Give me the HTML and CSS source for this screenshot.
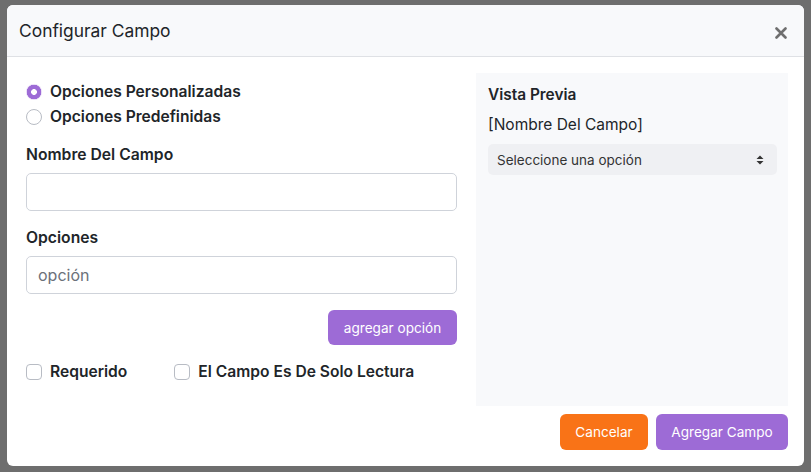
FILE: index.html
```html
<!DOCTYPE html>
<html lang="es">
<head>
<meta charset="utf-8">
<title>Configurar Campo</title>
<link rel="stylesheet" href="styles.css">
</head>
<body>
<div class="backdrop">
  <div class="modal">
    <div class="modal-header">
      <h2 class="modal-title">Configurar Campo</h2>
      <button class="close" aria-label="Cerrar">
        <svg width="12" height="12" viewBox="0 0 12 12"><path d="M1.5 1.5 L10.5 10.5 M10.5 1.5 L1.5 10.5" stroke="#6f6f6f" stroke-width="2.6" stroke-linecap="round"/></svg>
      </button>
    </div>
    <div class="modal-body">
      <div class="left">
        <div class="radios">
          <label class="radio-row"><span class="radio checked"></span><span>Opciones Personalizadas</span></label>
          <label class="radio-row"><span class="radio"></span><span>Opciones Predefinidas</span></label>
        </div>
        <div class="field">
          <div class="label">Nombre Del Campo</div>
          <div class="input"></div>
        </div>
        <div class="field">
          <div class="label">Opciones</div>
          <div class="input"><span class="placeholder">opción</span></div>
        </div>
        <div class="add-row">
          <button class="btn btn-purple btn-add">agregar opción</button>
        </div>
        <div class="checks">
          <label class="check-row"><span class="checkbox"></span><span>Requerido</span></label>
          <label class="check-row"><span class="checkbox"></span><span>El Campo Es De Solo Lectura</span></label>
        </div>
      </div>
      <div class="right">
        <div class="preview">
          <div class="preview-title">Vista Previa</div>
          <div class="preview-name">[Nombre Del Campo]</div>
          <div class="select">
            <span>Seleccione una opción</span>
            <svg width="8" height="10" viewBox="0 0 8 10"><path d="M4 0.5 L7.5 4 H0.5 Z M4 9.5 L7.5 6 H0.5 Z" fill="#333"/></svg>
          </div>
        </div>
        <div class="footer">
          <button class="btn btn-orange">Cancelar</button>
          <button class="btn btn-purple">Agregar Campo</button>
        </div>
      </div>
    </div>
  </div>
</div>
</body>
</html>
```

FILE: styles.css
```css
* { box-sizing: border-box; }
html, body { margin: 0; padding: 0; }
body {
  width: 811px;
  height: 472px;
  overflow: hidden;
  background: #6e6e6e;
  font-family: Inter, "Noto Sans", sans-serif;
  color: #212529;
}
.backdrop {
  padding: 5px 7px 0 7px;
}
.modal {
  width: 797px;
  height: 461px;
  background: #fff;
  border-radius: 6px;
  overflow: hidden;
  display: flex;
  flex-direction: column;
}
.modal-header {
  height: 52px;
  background: #f8f9fb;
  border-bottom: 1px solid #dfe1e5;
  display: flex;
  align-items: center;
  justify-content: space-between;
  padding: 0 17px 0 12px;
}
.modal-title {
  margin: 0;
  font-size: 17.4px;
  font-weight: 400;
  color: #212529;
}
.close {
  border: 0;
  background: transparent;
  padding: 0;
  width: 12px;
  height: 12px;
  display: flex;
  margin-top: 4px;
}
.modal-body {
  display: grid;
  grid-template-columns: 431px 312px;
  column-gap: 19px;
  padding: 16px 16px 16px 19px;
  flex: 1;
}
.left {
  display: flex;
  flex-direction: column;
}
.radios {
  padding-top: 6px;
  display: flex;
  flex-direction: column;
}
.radio-row, .check-row {
  display: flex;
  align-items: center;
  gap: 8px;
  font-size: 15.6px;
  font-weight: 600;
  height: 25px;
}
.radio {
  width: 16px;
  height: 16px;
  border-radius: 50%;
  border: 1px solid #b8bcc4;
  background: #fff;
  flex: none;
}
.radio.checked {
  border: 0;
  background: radial-gradient(circle, #fff 0 2.6px, #9d6bd6 3.2px 7px, #e8dcf6 7.5px);
}
.field {
  display: flex;
  flex-direction: column;
}
.label {
  font-size: 15.7px;
  font-weight: 600;
  height: 24px;
  line-height: 24px;
}
.radios + .field { margin-top: 14px; }
.field .label { margin-bottom: 6px; }
.field + .field { margin-top: 15px; }
.input {
  height: 38px;
  border: 1px solid #cfd3da;
  border-radius: 5px;
  display: flex;
  align-items: center;
  padding: 0 11px;
}
.placeholder {
  color: #6c717a;
  font-size: 16px;
}
.add-row {
  display: flex;
  justify-content: flex-end;
  margin-top: 16px;
}
.btn {
  border: 0;
  border-radius: 6px;
  color: #fff;
  font-family: Inter, "Noto Sans", sans-serif;
  font-size: 13.6px;
  font-weight: 400;
  height: 36px;
  padding: 0 15px;
}
.btn-add { width: 129px; padding: 0; height: 35px; }
.btn-purple { background: #9d6bd6; }
.btn-orange { background: #f97317; }
.checks {
  display: flex;
  gap: 47px;
  margin-top: 14px;
}
.checkbox {
  width: 16px;
  height: 16px;
  border: 1px solid #b8bcc4;
  border-radius: 4px;
  background: #fff;
  flex: none;
}
.right {
  display: flex;
  flex-direction: column;
}
.preview {
  height: 333px;
  background: #f8f9fb;
  padding: 12px 11px 12px 12px;
  display: flex;
  flex-direction: column;
}
.preview-title {
  font-size: 15.4px;
  font-weight: 600;
  height: 20px;
  line-height: 20px;
}
.preview-name {
  font-size: 15.5px;
  margin-top: 10px;
  height: 20px;
  line-height: 20px;
}
.select {
  margin-top: 9px;
  height: 31px;
  background: #eff0f3;
  border-radius: 5px;
  display: flex;
  align-items: center;
  justify-content: space-between;
  padding: 0 13px 0 9px;
  font-size: 13.5px;
  color: #333;
}
.footer {
  display: flex;
  justify-content: flex-end;
  gap: 8px;
  margin-top: 8px;
}
.footer .btn-orange { width: 88px; padding: 0; }
.footer .btn-purple { width: 132px; padding: 0; }
```
